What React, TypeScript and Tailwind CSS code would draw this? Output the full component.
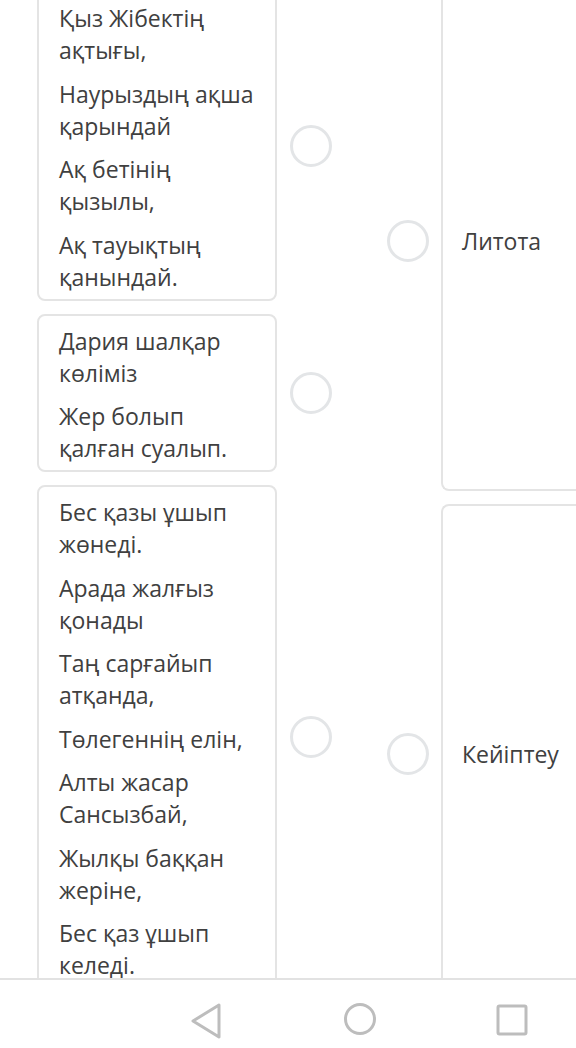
import React from 'react';

const leftCards: string[][] = [
  ['Қыз Жібектің ақтығы,', 'Наурыздың ақша қарындай', 'Ақ бетінің қызылы,', 'Ақ тауықтың қанындай.'],
  ['Дария шалқар көліміз', 'Жер болып қалған суалып.'],
  [
    'Бес қазы ұшып жөнеді.',
    'Арада жалғыз қонады',
    'Таң сарғайып атқанда,',
    'Төлегеннің елін,',
    'Алты жасар Сансызбай,',
    'Жылқы баққан жеріне,',
    'Бес қаз ұшып келеді.',
  ],
];

const rightCards = ['Литота', 'Кейіптеу'];

const Radio: React.FC = () => (
  <div className="h-[42px] w-[42px] shrink-0 rounded-full border-[3px] border-[#e3e5e7] bg-white" />
);

export default function App() {
  return (
    <div
      className="relative h-[1048px] w-[576px] overflow-hidden bg-white text-[#404040]"
      style={{ fontFamily: '"Open Sans", "Noto Sans", sans-serif' }}
    >
      <div className="-mt-[9px] flex items-start">
        {/* Left column: statements */}
        <div className="ml-[37px] flex flex-col gap-[13px]">
          {leftCards.map((lines, i) => (
            <div key={i} className="flex items-center gap-[13px]">
              <div className="w-[240px] rounded-lg border-2 border-[#e4e4e4] pb-[6px] pl-5 pr-4 pt-[9px]">
                <div className="flex flex-col gap-[11.5px] text-[23px] leading-[32px]">
                  {lines.map((l) => (
                    <p key={l}>{l}</p>
                  ))}
                </div>
              </div>
              <Radio />
            </div>
          ))}
        </div>

        {/* Right column: answers */}
        <div className="ml-[55px] flex flex-col gap-[13px]">
          {rightCards.map((t) => (
            <div key={t} className="flex items-center gap-[12px]">
              <Radio />
              <div className="flex h-[500px] w-[200px] items-center rounded-lg border-2 border-r-0 border-[#e4e4e4] pl-[19px]">
                <span className="text-[23px] leading-[32px]">{t}</span>
              </div>
            </div>
          ))}
        </div>
      </div>

      {/* Android navigation bar */}
      <div className="absolute bottom-0 left-0 right-0 flex h-[70px] items-center border-t-2 border-[#e2e2e2] bg-white">
        <svg className="absolute left-[189px] top-[22px]" width="34" height="38" viewBox="0 0 34 38">
          <path d="M30 3 L4 19 L30 35 Z" fill="none" stroke="#bdbdbd" strokeWidth="3" strokeLinejoin="round" />
        </svg>
        <svg className="absolute left-[343px] top-[22px]" width="34" height="34" viewBox="0 0 34 34">
          <circle cx="17" cy="17" r="14.5" fill="none" stroke="#bdbdbd" strokeWidth="3" />
        </svg>
        <svg className="absolute left-[496px] top-[24px]" width="32" height="32" viewBox="0 0 32 32">
          <rect x="2" y="2" width="28" height="28" rx="1.5" fill="none" stroke="#bdbdbd" strokeWidth="3" />
        </svg>
      </div>
    </div>
  );
}
